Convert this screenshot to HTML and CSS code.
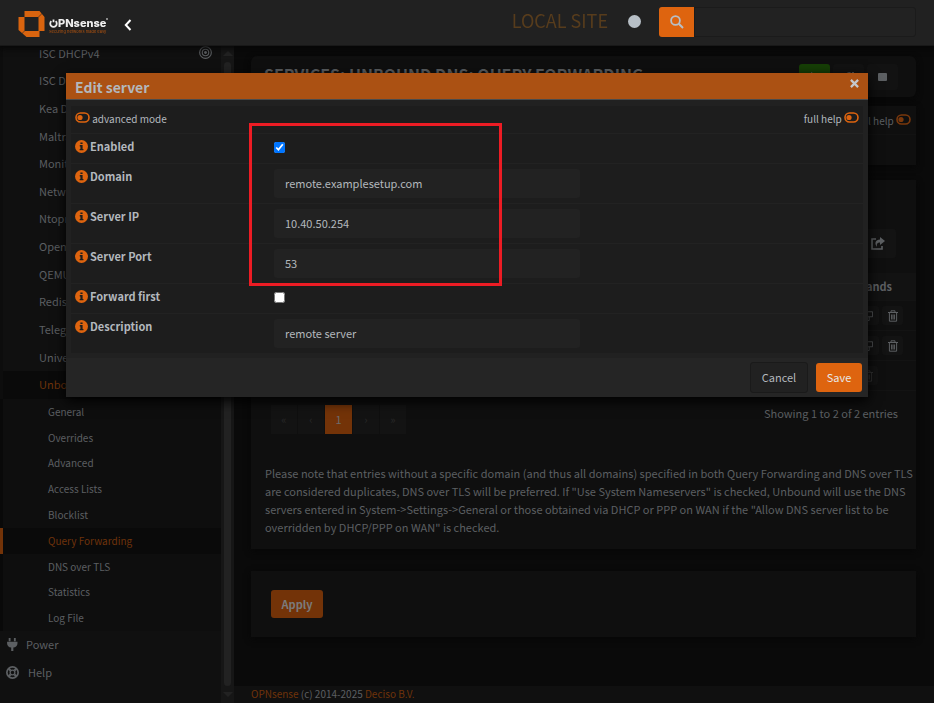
FILE: index.html
```html
<!DOCTYPE html>
<html lang="en">
<head>
  <meta charset="UTF-8">
  <meta name="viewport" content="width=device-width, initial-scale=1.0">
  <title>Query Forwarding | Unbound DNS | Services</title>
  <link rel="stylesheet" href="styles.css">
</head>
<body>
  <!-- Shared icons -->
  <svg class="icon-defs" aria-hidden="true">
    <symbol id="toggle" viewBox="0 0 15 11">
      <rect x="1" y="1" width="13" height="9" rx="4.5" fill="none" stroke="currentColor" stroke-width="1.6"/>
      <circle cx="5" cy="5.5" r="2.6" fill="currentColor"/>
    </symbol>
    <symbol id="info" viewBox="0 0 12 12">
      <circle cx="6" cy="6" r="6" fill="currentColor"/>
      <path d="M5 2.2h2v1.6H5zM4.4 4.7H7v3.6h.8v1.2H4.3V8.3H5V5.9h-.6z" fill="#1d1d1d"/>
    </symbol>
    <symbol id="trash" viewBox="0 0 10 12">
      <path d="M0 2.5h10M3 2.3V.8h4v1.5M1.4 2.5v8.7h7.2V2.5M3.6 4.5v5M5 4.5v5M6.4 4.5v5" fill="none" stroke="currentColor" stroke-width="1"/>
    </symbol>
    <symbol id="copy" viewBox="0 0 12 12">
      <path d="M4.5.9h7v6h-7zM4.5 4H.6v7.4h6.8V7" fill="none" stroke="currentColor"/>
    </symbol>
  </svg>

  <header class="topbar">
    <a class="brand" href="#">
      <svg class="brand-mark" viewBox="0 0 26 26" aria-hidden="true">
        <path fill="#d9640f" fill-rule="evenodd" d="M6 0h15l5 6v14h-5v6H8l-8-7V6h6zM6 6v14h14V6z"/>
        <path d="M20 6l5-5M6 20l-5 5" stroke="#212121" stroke-width=".6"/>
      </svg>
      <span class="brand-text">
        <span class="brand-name">
          <svg viewBox="0 0 10 10" aria-hidden="true"><path d="M2.6 2.4a3.6 3.6 0 1 0 4.8 0M5 .5v3" fill="none" stroke="#eee" stroke-width="2"/></svg>PNsense
          <svg class="mark" viewBox="0 0 2 2" aria-hidden="true"><circle cx="1" cy="1" r="1" fill="#aaa"/></svg>
        </span>
        <span class="brand-slogan">Securing networks made easy</span>
      </span>
    </a>
    <button class="collapse" type="button" aria-label="Toggle menu">
      <svg viewBox="0 0 8 12" aria-hidden="true"><path d="M6.5 1L1.8 6l4.7 5" fill="none" stroke="currentColor" stroke-width="2"/></svg>
    </button>
    <span class="site-name">LOCAL SITE</span>
    <span class="status-dot"></span>
    <form class="search">
      <button type="button" aria-label="Search">
        <svg viewBox="0 0 14 14" aria-hidden="true"><circle cx="5.5" cy="5.5" r="4.4" fill="none" stroke="currentColor" stroke-width="1.8"/><path d="M8.8 8.8L13 13" stroke="currentColor" stroke-width="2"/></svg>
      </button>
      <input type="text" aria-label="Search menu">
    </form>
  </header>

  <div class="layout">
    <aside class="sidebar">
      <nav class="menu">
        <div class="menu-services">
          <a href="#">ISC DHCPv4
            <svg viewBox="0 0 12 12" aria-hidden="true"><g fill="none" stroke="currentColor"><circle cx="6" cy="6" r="5.4"/><circle cx="6" cy="6" r="3"/></g><circle cx="6" cy="6" r="1.3" fill="currentColor"/></svg>
          </a>
          <a href="#">ISC DHCPv6</a>
          <a href="#">Kea DHCP</a>
          <a href="#">Maltrail</a>
          <a href="#">Monit</a>
          <a href="#">Network Time</a>
          <a href="#">Ntopng</a>
          <a href="#">OpenDNS</a>
          <a href="#">QEMU Guest Agent</a>
          <a href="#">Redis</a>
          <a href="#">Telegraf</a>
          <a href="#">Universal Plug and Play</a>
          <a class="open" href="#">Unbound DNS</a>
        </div>
        <div class="submenu">
          <a href="#">General</a>
          <a href="#">Overrides</a>
          <a href="#">Advanced</a>
          <a href="#">Access Lists</a>
          <a href="#">Blocklist</a>
          <a class="active" href="#">Query Forwarding</a>
          <a href="#">DNS over TLS</a>
          <a href="#">Statistics</a>
          <a href="#">Log File</a>
        </div>
        <a class="menu-root" href="#">
          <svg viewBox="0 0 12 12" aria-hidden="true"><path d="M2.5 0h1.7v3H2.5zM7.3 0H9v3H7.3zM1 3.5h9.600V5c0 2-1.600 3.500-3.800 3.800V12h-2V8.800C2.600 8.500 1 7 1 5z" fill="currentColor"/></svg>
          Power
        </a>
        <a class="menu-root help" href="#">
          <svg viewBox="0 0 12 12" aria-hidden="true"><g fill="none" stroke="currentColor"><circle cx="6" cy="6" r="5.2" stroke-width="1.6"/><circle cx="6" cy="6" r="2.2" stroke-width="1.2"/><path d="M2.200 2.200l2 2M9.800 2.200l-2 2M2.200 9.800l2-2M9.800 9.800l-2-2" stroke-width="2"/></g></svg>
          Help
        </a>
      </nav>
      <div class="scrollbar" aria-hidden="true">
        <span class="arrow-up"></span>
        <span class="thumb"></span>
        <span class="arrow-down"></span>
      </div>
    </aside>

    <div class="page">
      <main>
        <section class="panel title-panel">
          <h1>SERVICES: UNBOUND DNS: QUERY FORWARDING</h1>
          <div class="service-buttons">
            <button class="play" type="button" aria-label="Start"><svg viewBox="0 0 10 10"><path d="M1 0l9 5-9 5z" fill="currentColor"/></svg></button>
            <button type="button" aria-label="Restart"><svg viewBox="0 0 10 10"><path d="M8.500 3A4 4 0 1 0 9 6M9 0v3.500H5.500" fill="none" stroke="currentColor" stroke-width="1.600"/></svg></button>
            <button type="button" aria-label="Stop"><svg viewBox="0 0 10 10"><rect x="0" y="1" width="9" height="8" rx="1" fill="currentColor"/></svg></button>
          </div>
        </section>

        <section class="panel help-panel">
          <div class="help-line">full help <svg class="toggle"><use href="#toggle"/></svg></div>
        </section>

        <section class="panel list-panel">
          <div class="list-tools">
            <button type="button" aria-label="Export">
              <svg viewBox="0 0 14 13" aria-hidden="true"><path d="M5 2H1v10h10V9" fill="none" stroke="currentColor" stroke-width="1.600"/><path d="M9 0l5 4-5 4V5.500c-2.500 0-3.500 1-3 4.500C3 6.500 4.500 2.800 9 2.600z" fill="currentColor"/></svg>
            </button>
          </div>
          <table class="list">
            <thead>
              <tr><th>Commands</th></tr>
            </thead>
            <tbody>
              <tr><td><button type="button" aria-label="Clone"><svg><use href="#copy"/></svg></button> <button type="button" aria-label="Delete"><svg><use href="#trash"/></svg></button></td></tr>
              <tr><td><button type="button" aria-label="Clone"><svg><use href="#copy"/></svg></button> <button type="button" aria-label="Delete"><svg><use href="#trash"/></svg></button></td></tr>
              <tr class="list-foot"><td><button type="button" aria-label="Delete selected"><svg><use href="#trash"/></svg></button></td></tr>
            </tbody>
          </table>
          <div class="list-footer">
            <div class="pagination">
              <a href="#">«</a><a href="#">‹</a><a class="current" href="#">1</a><a href="#">›</a><a href="#">»</a>
            </div>
            <span>Showing 1 to 2 of 2 entries</span>
          </div>
          <p class="note">Please note that entries without a specific domain (and thus all domains) specified in both Query Forwarding and DNS over TLS<br>
            are considered duplicates, DNS over TLS will be preferred. If "Use System Nameservers" is checked, Unbound will use the DNS<br>
            servers entered in System-&gt;Settings-&gt;General or those obtained via DHCP or PPP on WAN if the "Allow DNS server list to be<br>
            overridden by DHCP/PPP on WAN" is checked.</p>
        </section>

        <section class="panel apply-panel">
          <button class="apply" type="button">Apply</button>
        </section>
      </main>
      <footer class="footer"><a href="#">OPNsense</a> (c) 2014-2025 <a href="#">Deciso B.V.</a></footer>
    </div>
  </div>

  <!-- Edit dialog -->
  <div class="modal" role="dialog" aria-labelledby="modal-title">
    <div class="modal-header">
      <h2 id="modal-title">Edit server</h2>
      <button class="close" type="button" aria-label="Close">
        <svg viewBox="0 0 8 8" aria-hidden="true"><path d="M.8.8l6.400 6.400M7.200.8L.8 7.200" stroke="currentColor" stroke-width="2"/></svg>
      </button>
    </div>
    <form class="modal-form">
      <div class="form-options">
        <span><svg class="toggle"><use href="#toggle"/></svg> advanced mode</span>
        <span>full help <svg class="toggle"><use href="#toggle"/></svg></span>
      </div>
      <div class="form-row check">
        <label for="enabled"><svg><use href="#info"/></svg>Enabled</label>
        <input type="checkbox" id="enabled" checked>
      </div>
      <div class="form-row">
        <label for="domain"><svg><use href="#info"/></svg>Domain</label>
        <input type="text" id="domain" value="remote.examplesetup.com">
      </div>
      <div class="form-row">
        <label for="server"><svg><use href="#info"/></svg>Server IP</label>
        <input type="text" id="server" value="10.40.50.254">
      </div>
      <div class="form-row">
        <label for="port"><svg><use href="#info"/></svg>Server Port</label>
        <input type="text" id="port" value="53">
      </div>
      <div class="form-row check">
        <label for="forward"><svg><use href="#info"/></svg>Forward first</label>
        <input type="checkbox" id="forward">
      </div>
      <div class="form-row">
        <label for="description"><svg><use href="#info"/></svg>Description</label>
        <input type="text" id="description" value="remote server">
      </div>
    </form>
    <div class="modal-footer">
      <button class="cancel" type="button">Cancel</button>
      <button class="save" type="button">Save</button>
    </div>
    <div class="highlight"></div>
  </div>
</body>
</html>
```
FILE: styles.css
```css
* {
  box-sizing: border-box;
}

body {
  margin: 0;
  font-family: "Noto Sans CJK SC", "Open Sans", sans-serif;
  font-size: 11px;
  line-height: 18px;
  background-color: #0a0a0a;
  color: #5c5f62;
}

a {
  color: inherit;
  text-decoration: none;
}

button,
input {
  font: inherit;
  color: inherit;
}

button {
  display: inline-flex;
  align-items: center;
  justify-content: center;
  padding: 0;
  border: 0;
  border-radius: 3px;
  background: none;
}

svg {
  display: block;
  flex: none;
}

.icon-defs {
  position: absolute;
  width: 0;
  height: 0;
}

.toggle {
  display: inline-block;
  width: 15px;
  height: 11px;
  color: #de640f;
}

/* Top bar */
.topbar {
  position: fixed;
  top: 0;
  left: 0;
  right: 0;
  z-index: 2;
  display: flex;
  align-items: center;
  height: 46px;
  padding: 0 18px;
  background-color: #212121;
  border-bottom: 1px solid #181818;
  box-shadow: 0 2px 6px #050505;
}

.brand {
  display: flex;
  align-items: center;
  gap: 4px;
  width: 106px;
  padding-top: 2px;
}

.brand-mark {
  width: 27px;
  height: 26px;
}

.brand-text {
  display: flex;
  flex-direction: column;
  padding-top: 6px;
}

.brand-name {
  display: flex;
  align-items: center;
  font-family: Inter, sans-serif;
  font-size: 11px;
  font-weight: 800;
  line-height: 11px;
  color: #eee;
}

.brand-name svg {
  width: 9px;
  height: 9px;
}

.brand-name .mark {
  align-self: flex-start;
  width: 2px;
  height: 2px;
}

.brand-slogan {
  font-family: Inter, sans-serif;
  font-size: 4px;
  line-height: 6px;
  color: #b4540f;
  white-space: nowrap;
}

.collapse {
  padding-top: 5px;
}

.collapse svg {
  width: 8px;
  height: 12px;
  color: #fff;
}

.site-name {
  margin-left: auto;
  padding-bottom: 6px;
  font-size: 18px;
  color: #573c1c;
}

.status-dot {
  width: 13px;
  height: 13px;
  margin: 0 18px 2px 20px;
  border-radius: 50%;
  background-color: #b7bfc6;
}

.search {
  display: flex;
  width: 257px;
  height: 30px;
  margin-bottom: 2px;
}

.search button {
  width: 35px;
  border-radius: 3px 0 0 3px;
  background-color: #de640f;
  color: #b7bfc6;
}

.search svg {
  width: 14px;
  height: 14px;
}

.search input {
  flex: 1;
  min-width: 0;
  border: 1px solid #1b1b1b;
  border-radius: 0 3px 3px 0;
  background-color: #222;
}

.layout {
  display: flex;
  min-height: 100vh;
}

/* Sidebar */
.sidebar {
  display: flex;
  flex: none;
  width: 234px;
  padding-top: 40px;
  background-color: #101010;
}

.menu {
  flex: 1;
}

.menu-services,
.submenu {
  display: grid;
  grid-auto-rows: 1fr;
}

.menu-services {
  height: 359px;
  border-left: 3px solid #0d0d0d;
}

.submenu {
  height: 232px;
  background-color: #0e0e0e;
  border-left: 3px solid #090909;
}

.menu a {
  display: flex;
  align-items: center;
}

.menu-services a {
  justify-content: space-between;
  padding: 0 9px 2px 36px;
  white-space: nowrap;
}

.menu-services svg {
  width: 13px;
  height: 13px;
}

.menu-services .open {
  background-color: #0a0a0a;
  color: #6f330a;
}

.submenu a {
  padding-left: 45px;
  font-size: 10px;
}

.submenu .active {
  margin-left: -3px;
  border-left: 3px solid #733308;
  background-color: #0a0a0a;
  color: #6f330a;
}

.menu .menu-root {
  gap: 7px;
  height: 28px;
  padding: 0 0 2px 6px;
}

.menu-root svg {
  width: 13px;
  height: 13px;
}

.menu .help {
  gap: 9px;
}

.scrollbar {
  display: flex;
  flex-direction: column;
  align-items: center;
  width: 13px;
  padding: 11px 0 6px;
  background-color: #161616;
}

.scrollbar .thumb {
  flex: 1;
  width: 7px;
  margin: 6px 0;
  border-radius: 4px;
  background-color: #222;
}

.arrow-up,
.arrow-down {
  border: 5px solid transparent;
}

.arrow-up {
  border-top: 0;
  border-bottom-color: #222;
}

.arrow-down {
  border-bottom: 0;
  border-top-color: #222;
}

/* Content */
.page {
  display: flex;
  flex: 1;
  flex-direction: column;
  min-width: 0;
  padding-top: 56px;
}

main {
  flex: 1;
  padding: 0 18px 0 17px;
}

.panel {
  background-color: #0f0f0f;
  box-shadow: 0 2px 6px #070707;
}

.title-panel {
  display: flex;
  align-items: center;
  justify-content: space-between;
  height: 41px;
  padding: 0 18px 0 13px;
  border-radius: 6px;
}

.title-panel h1 {
  margin: 0;
  padding-bottom: 6px;
  font-size: 16px;
  font-weight: bold;
}

.service-buttons {
  display: flex;
  gap: 3px;
}

.service-buttons button {
  width: 31px;
  height: 26px;
  background-color: #121212;
}

.service-buttons .play {
  background-color: #163f06;
}

.service-buttons svg {
  width: 10px;
  height: 10px;
}

.help-panel {
  height: 59px;
  margin-top: 9px;
}

.help-line {
  padding: 6px 5px 4px;
  border-bottom: 1px solid #121212;
  font-size: 10px;
  line-height: 18px;
  text-align: right;
}

.help-panel .toggle {
  color: #7a380c;
}

.list-panel {
  height: 369px;
  margin-top: 15px;
}

.list-tools {
  display: flex;
  justify-content: flex-end;
  height: 93px;
  padding: 49px 20px 15px;
}

.list-tools button {
  width: 36px;
  background-color: #131313;
}

.list-tools svg {
  width: 14px;
  height: 13px;
}

.list {
  width: 100%;
  border-collapse: collapse;
}

.list th,
.list td {
  height: 30px;
  padding: 0 13px;
  border-bottom: 1px solid #131313;
  text-align: right;
}

.list th {
  height: 27px;
  padding-right: 24px;
  background-color: #121212;
}

.list button {
  width: 21px;
  height: 19px;
  margin-left: 1px;
  background-color: #131313;
  vertical-align: middle;
}

.list svg {
  width: 10px;
  height: 12px;
}

.list-foot button {
  margin-right: 25px;
  color: #333;
}

.list-footer {
  display: flex;
  justify-content: space-between;
  padding: 14px 18px 0 20px;
}

.list-footer span {
  line-height: 16px;
}

.pagination {
  display: flex;
  gap: 1px;
}

.pagination a {
  width: 26px;
  height: 29px;
  background-color: #131313;
  color: #292929;
  line-height: 29px;
  text-align: center;
}

.pagination .current {
  width: 27px;
  background-color: #733308;
  color: #6c6c6c;
}

.note {
  margin: 30px 0 0 14px;
  white-space: nowrap;
}

.apply-panel {
  height: 66px;
  margin-top: 22px;
  padding: 19px 20px;
}

.apply {
  width: 52px;
  height: 28px;
  background-color: #733308;
  color: #7b7b7b;
  font-weight: bold;
}

.footer {
  height: 17px;
  padding-left: 17px;
  background-color: #101010;
  font-size: 10px;
  line-height: 15px;
}

.footer a {
  color: #6f330a;
}

/* Edit dialog */
.modal {
  position: absolute;
  top: 73px;
  left: 66px;
  right: 66px;
  z-index: 3;
  background-color: #212121;
  box-shadow: 0 4px 12px #000;
  color: #b3b8bd;
}

.modal-header {
  display: flex;
  align-items: center;
  justify-content: space-between;
  height: 27px;
  padding: 2px 9px 0;
  background-color: #ab5113;
  border-bottom: 1px solid #4b4b4b;
}

.modal-header h2 {
  margin: 0;
  font-size: 14px;
  font-weight: bold;
}

.close {
  padding-bottom: 8px;
}

.close svg {
  width: 9px;
  height: 9px;
  color: #c5c8cb;
}

.modal-form {
  margin: 6px 5px 5px;
  background-color: #1d1d1d;
}

.form-options {
  display: flex;
  justify-content: space-between;
  height: 27px;
  padding: 4px;
  font-size: 10px;
}

.form-row {
  display: flex;
  height: 40px;
  border-top: 1px solid #222;
}

.form-row.check {
  height: 30px;
}

.form-row label {
  display: flex;
  gap: 2px;
  width: 203px;
  padding: 3px 4px 0;
  font-weight: bold;
}

.form-row label svg {
  width: 13px;
  height: 13px;
  margin-top: 3px;
  color: #de640f;
}

.form-row input[type="text"] {
  width: 306px;
  height: 29px;
  margin-top: 5px;
  padding: 0 11px 1px;
  border: 0;
  border-radius: 3px;
  background-color: #222;
}

.form-row input[type="checkbox"] {
  width: 11px;
  height: 11px;
  margin: 8px 0 0;
}

.modal-footer {
  display: flex;
  align-items: center;
  justify-content: flex-end;
  gap: 8px;
  height: 39px;
  padding-right: 6px;
  background-color: #252525;
}

.modal-footer button {
  padding-bottom: 2px;
}

.cancel {
  width: 58px;
  height: 31px;
  border: 1px solid #1a1a1a;
  background-color: #212121;
}

.save {
  width: 46px;
  height: 29px;
  background-color: #de640f;
  color: #e8e8e8;
}

.highlight {
  position: absolute;
  top: 50px;
  left: 183px;
  width: 253px;
  height: 163px;
  border: 3px solid #ed1c24;
  pointer-events: none;
}
```
